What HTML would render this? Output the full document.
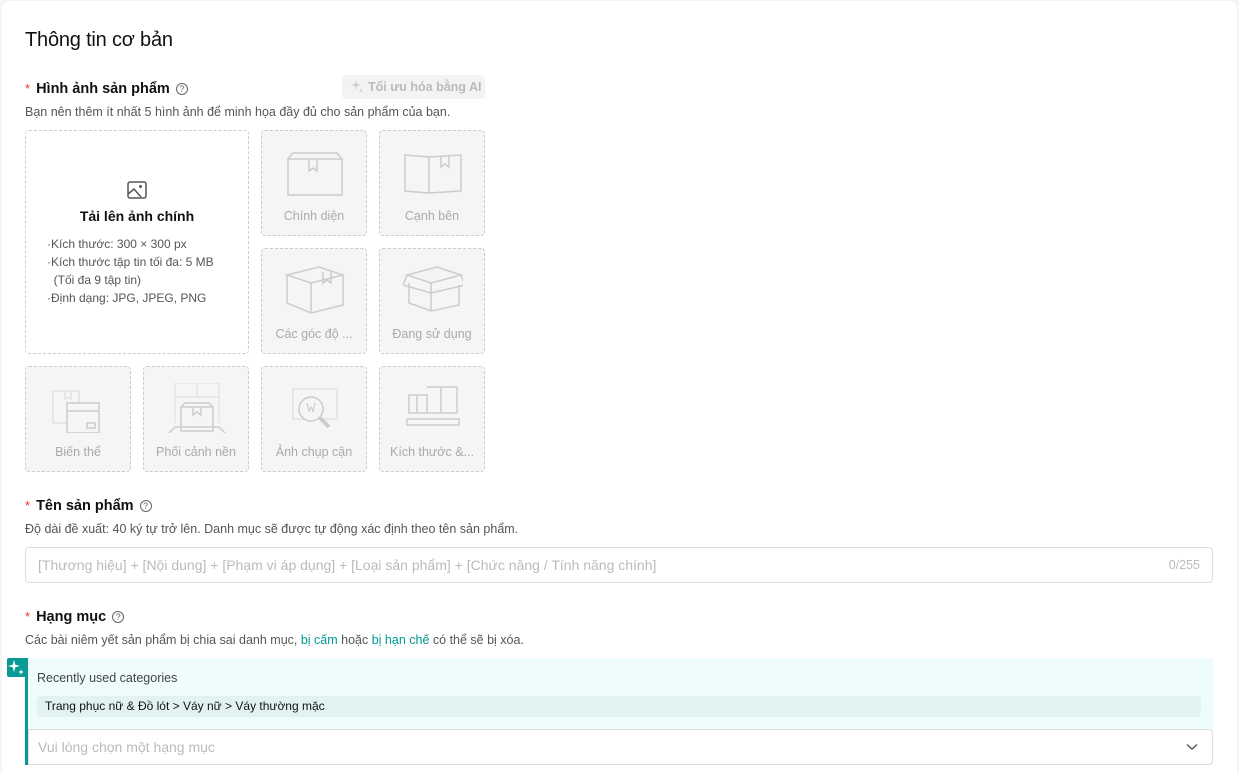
<!DOCTYPE html>
<html><head><meta charset="utf-8">
<style>
*{box-sizing:border-box;margin:0;padding:0}
html,body{width:1239px;height:774px;overflow:hidden}
body{background:#f5f5f5;font-family:"Liberation Sans",Arial,sans-serif;position:relative;color:#222}
.card{position:absolute;left:2px;top:1px;width:1235px;height:773px;background:#fff;border-radius:8px 8px 0 0}
.a{position:absolute}
h1{position:absolute;left:25px;top:29px;font-size:20px;font-weight:400;color:#111;letter-spacing:-0.2px}
.lbl{position:absolute;left:25px;font-size:14.5px;font-weight:700;color:#111;white-space:nowrap}
.lbl .st{color:#f02d2d;font-size:13px;margin-right:6px;font-weight:400}
.q{display:inline-block;width:12px;height:12px;border:1px solid #666;border-radius:50%;font-size:9px;text-align:center;line-height:10px;font-weight:400;color:#666;margin-left:6px;vertical-align:1px}
.sub{position:absolute;left:25px;font-size:12.5px;color:#555;white-space:nowrap}
.tile{position:absolute;width:106px;height:106px;border:1px dashed #ccc;border-radius:4px;background:#f5f5f5;text-align:center}
.tile span{position:absolute;left:0;right:0;top:78px;font-size:12.5px;color:#aaa}
.tile svg{position:absolute;left:23px;top:16px}
.big{position:absolute;left:25px;top:130px;width:224px;height:224px;border:1px dashed #ccc;border-radius:4px;background:#fff}
.inp{position:absolute;left:25px;width:1188px;height:36px;border:1px solid #ddd;border-radius:4px;background:#fff}
.teal{color:#009995}
</style></head><body>
<div class="card"></div>
<h1>Thông tin cơ bản</h1>

<div class="lbl" style="top:81px"><span class="st">*</span>Hình ảnh sản phẩm<span class="q">?</span></div>
<div class="a" style="left:342px;top:75px;width:143px;height:24px;background:#f3f3f3;border-radius:4px;font-size:12.5px;color:#bbb;line-height:24px;padding-left:8px;font-weight:700;white-space:nowrap">
<svg width="14" height="14" viewBox="0 0 14 14" style="vertical-align:-2px;margin-right:4px"><path d="M6 1 L7 5 L11 6 L7 7 L6 11 L5 7 L1 6 L5 5Z M11 9 L11.5 11 L13 11.5 L11.5 12 L11 14 L10.5 12 L9 11.5 L10.5 11Z" fill="#ccc"/></svg>Tối ưu hóa bằng AI</div>
<div class="sub" style="top:105px">Bạn nên thêm ít nhất 5 hình ảnh để minh họa đầy đủ cho sản phẩm của bạn.</div>

<div class="big">
<svg class="a" style="left:101px;top:50px" width="20" height="18" viewBox="0 0 20 18"><rect x="1" y="1" width="18" height="16" rx="2" fill="none" stroke="#555" stroke-width="1.5"/><circle cx="13.5" cy="5.5" r="1.5" fill="#555"/><path d="M1 13 L7 8 L14 16" fill="none" stroke="#555" stroke-width="1.5"/></svg>
<div class="a" style="left:0;right:0;top:77px;text-align:center;font-size:14px;font-weight:700;color:#111">Tải lên ảnh chính</div>
<div class="a" style="left:21px;top:104px;font-size:12px;color:#555;line-height:18px">·Kích thước: 300 × 300 px<br>·Kích thước tập tin tối đa: 5 MB<br>&nbsp;&nbsp;(Tối đa 9 tập tin)<br>·Định dạng: JPG, JPEG, PNG</div>
</div>

<div class="tile" style="left:261px;top:130px"><svg width="60" height="50" viewBox="0 0 60 50"><path d="M3 12 L8 6 L52 6 L57 12 Z M3 12 L57 12 L57 48 L3 48 Z M24 12 L24 24 L28 21 L32 24 L32 12" fill="none" stroke="#ccc" stroke-width="1.5"/></svg><span>Chính diện</span></div>
<div class="tile" style="left:379px;top:130px"><svg width="60" height="50" viewBox="0 0 60 50"><path d="M2 8 L26 10 L26 46 L2 44 Z M26 10 L58 8 L58 44 L26 46 M38 9 L38 20 L42 17 L46 20 L46 9" fill="none" stroke="#ccc" stroke-width="1.5"/></svg><span>Cạnh bên</span></div>
<div class="tile" style="left:261px;top:248px"><svg width="60" height="50" viewBox="0 0 60 50"><path d="M2 10 L34 2 L58 10 L26 18 Z M2 10 L2 38 L26 48 L58 40 L58 10 M26 18 L26 48 M38 7 L38 18 L42 15 L46 18 L46 7" fill="none" stroke="#ccc" stroke-width="1.5"/></svg><span>Các góc độ ...</span></div>
<div class="tile" style="left:379px;top:248px"><svg width="60" height="50" viewBox="0 0 60 50"><path d="M4 10 L34 2 L58 10 L28 18 Z M4 10 L0 20 L28 28 L28 18 M58 10 L62 20 L28 28 M6 18 L6 38 L28 46 L56 40 L56 20 M28 28 L28 46" fill="none" stroke="#ccc" stroke-width="1.5"/></svg><span>Đang sử dụng</span></div>

<div class="tile" style="left:25px;top:366px"><svg width="60" height="50" viewBox="0 0 60 50"><path d="M4 8 L30 8 L30 40 L4 40 Z M16 8 L16 16 L19 14 L22 16 L22 8" fill="none" stroke="#e2e2e2" stroke-width="1.5"/><path d="M18 20 L50 20 L50 50 L18 50 Z M18 28 L50 28 M38 40 L46 40 L46 45 L38 45 Z" fill="#f5f5f5" stroke="#ccc" stroke-width="1.5"/></svg><span>Biến thể</span></div>
<div class="tile" style="left:143px;top:366px"><svg width="60" height="50" viewBox="0 0 60 50"><path d="M8 0 L52 0 L52 40 M8 0 L8 40 M30 0 L30 14 M8 14 L52 14" fill="none" stroke="#e5e5e5" stroke-width="1.5"/><path d="M0 52 L8 44 L52 44 L60 52 Z M14 24 L46 24 L46 48 L14 48 Z M14 24 L18 20 L42 20 L46 24 M26 24 L26 32 L30 29 L34 32 L34 24" fill="#f5f5f5" stroke="#ccc" stroke-width="1.5"/></svg><span>Phối cảnh nền</span></div>
<div class="tile" style="left:261px;top:366px"><svg width="60" height="50" viewBox="0 0 60 50"><path d="M8 6 L52 6 L52 36 L8 36 Z" fill="none" stroke="#e2e2e2" stroke-width="1.5"/><circle cx="26" cy="26" r="12" fill="#f5f5f5" stroke="#ccc" stroke-width="1.5"/><path d="M35 35 L44 44" stroke="#ccc" stroke-width="4"/><path d="M22 20 L24 28 L26 24 L28 28 L30 20" fill="none" stroke="#ccc" stroke-width="1.2"/></svg><span>Ảnh chụp cận</span></div>
<div class="tile" style="left:379px;top:366px"><svg width="60" height="50" viewBox="0 0 60 50"><path d="M6 12 L24 12 L24 30 L6 30 Z M14 12 L14 30 M24 4 L54 4 L54 30 L24 30 M38 4 L38 30 M4 36 L56 36 L56 42 L4 42 Z" fill="none" stroke="#ccc" stroke-width="1.5"/></svg><span>Kích thước &amp;...</span></div>

<div class="lbl" style="top:498px"><span class="st">*</span>Tên sản phẩm<span class="q">?</span></div>
<div class="sub" style="top:522px">Độ dài đề xuất: 40 ký tự trở lên. Danh mục sẽ được tự động xác định theo tên sản phẩm.</div>
<div class="inp" style="top:547px"><span class="a" style="left:12px;top:9px;font-size:14px;color:#bbb;white-space:nowrap">[Thương hiệu] + [Nội dung] + [Phạm vi áp dụng] + [Loại sản phẩm] + [Chức năng / Tính năng chính]</span><span class="a" style="right:12px;top:10px;font-size:12.5px;color:#bbb">0/255</span></div>

<div class="lbl" style="top:609px"><span class="st">*</span>Hạng mục<span class="q">?</span></div>
<div class="sub" style="top:633px">Các bài niêm yết sản phẩm bị chia sai danh mục, <span class="teal">bị cấm</span> hoặc <span class="teal">bị hạn chế</span> có thể sẽ bị xóa.</div>
<div class="a" style="left:25px;top:658px;width:1188px;height:107px;background:#effcfc;border-left:3px solid #0a9a95"></div>
<div class="a" style="left:7px;top:658px;width:19px;height:19px;background:#0a9a95;border-radius:2px 0 0 2px"><svg width="19" height="19" viewBox="0 0 19 19"><path d="M7 2 L8.3 6.7 L13 8 L8.3 9.3 L7 14 L5.7 9.3 L1 8 L5.7 6.7Z M14 11 L14.7 13.3 L17 14 L14.7 14.7 L14 17 L13.3 14.7 L11 14 L13.3 13.3Z" fill="#fff"/></svg></div>
<div class="a" style="left:37px;top:671px;font-size:12.5px;color:#444">Recently used categories</div>
<div class="a" style="left:37px;top:696px;width:1164px;height:21px;background:#e2f2f2;border-radius:4px;font-size:12px;color:#111;line-height:21px;padding-left:8px">Trang phục nữ &amp; Đồ lót &gt; Váy nữ &gt; Váy thường mặc</div>
<div class="a" style="left:28px;top:729px;width:1185px;height:36px;background:#fff;border:1px solid #ddd;border-radius:0 4px 4px 0"><span class="a" style="left:9px;top:9px;font-size:14px;color:#bbb">Vui lòng chọn một hạng mục</span><svg class="a" style="right:14px;top:13px" width="12" height="8" viewBox="0 0 12 8"><path d="M1 1.5 L6 6 L11 1.5" fill="none" stroke="#555" stroke-width="1.4"/></svg></div>
</body></html>
